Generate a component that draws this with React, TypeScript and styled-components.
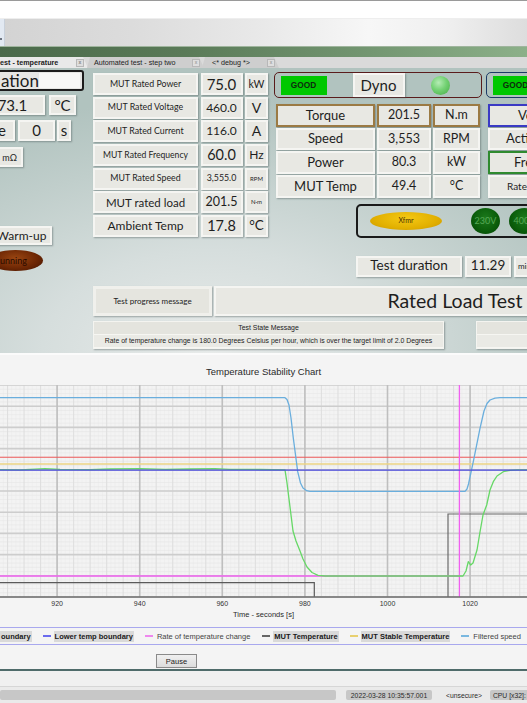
import React from "react";
import styled, { createGlobalStyle } from "styled-components";

const Global = createGlobalStyle`
  html, body { margin: 0; padding: 0; background: #ffffff; }
  body { font-family: Lato, "Noto Sans", sans-serif; }
  #root { width: 527px; height: 703px; }
`;

const Screen = styled.div`
  width: 527px;
  height: 703px;
  overflow: hidden;
  display: flex;
  flex-direction: column;
  background: #ffffff;
`;

const TopGap = styled.div`
  flex: none;
  height: 17px;
  border-top: 1px solid #9a9a9a;
  background: #ffffff;
`;

const Toolbar = styled.div`
  flex: none;
  height: 28px;
  display: flex;
  background: linear-gradient(90deg, #d3d3d3 0%, #dcdcdc 25%, #e9e9e9 50%, #f7f7f7 70%, #efefef 85%, #dddddd 100%);
  border-top: 1px solid #eeeeee;
  box-sizing: border-box;
`;

const ToolbarStub = styled.div`
  width: 4px;
  height: 100%;
  background: #e2e9f2;
  border-right: 1px solid #c8d0da;
  position: relative;
  &::after {
    content: "";
    position: absolute;
    left: 0;
    top: 19px;
    width: 2px;
    height: 2px;
    background: #6d7480;
  }
`;

const GreenBand = styled.div`
  flex: none;
  height: 11px;
  background: linear-gradient(90deg, #4a694a 0%, #5a7a58 35%, #739671 70%, #8cb089 100%);
  border-top: 1px solid #9fb59d;
  box-sizing: border-box;
`;

const TabBar = styled.div`
  flex: none;
  height: 11px;
  display: flex;
  background: #dadada;
`;

const Tab = styled.div<{ $active?: boolean; $w: number; $ml?: number; $pl: number }>`
  flex: none;
  width: ${(p) => p.$w}px;
  margin-left: ${(p) => p.$ml ?? 0}px;
  padding-left: ${(p) => p.$pl}px;
  padding-right: 4px;
  box-sizing: border-box;
  display: flex;
  align-items: center;
  background: ${(p) => (p.$active ? "#e9e9e9" : "#cecece")};
  clip-path: polygon(0 100%, 3px 0, calc(100% - 5px) 0, 100% 100%);
  font-family: "Liberation Sans", Arial, sans-serif;
  font-size: 7.2px;
  font-weight: ${(p) => (p.$active ? 700 : 400)};
  color: #222222;
  white-space: nowrap;
`;

const TabClose = styled.span`
  margin-left: auto;
  width: 6px;
  height: 6px;
  border: 1px solid #b8b8b8;
  background: #dedede;
  color: #888888;
  font-size: 5px;
  line-height: 5px;
  text-align: center;
  font-family: "Liberation Sans", Arial, sans-serif;
`;

const Main = styled.div`
  flex: none;
  height: 285px;
  box-sizing: border-box;
  padding-top: 2px;
  display: flex;
  flex-direction: column;
  background:
    radial-gradient(ellipse 80% 90% at 40% 100%, #e8ebea 0%, #d6dedd 40%, #c0cecb 75%, #b1c3bf 100%);
`;

const TopSection = styled.div`
  display: flex;
  align-items: flex-start;
`;

const LeftCol = styled.div`
  flex: none;
  width: 84px;
  display: flex;
  flex-direction: column;
  align-items: flex-start;
`;

const Row = styled.div<{ $h: number; $mt?: number; $ml?: number }>`
  flex: none;
  display: flex;
  height: ${(p) => p.$h}px;
  margin-top: ${(p) => p.$mt ?? 0}px;
  margin-left: ${(p) => p.$ml ?? 0}px;
`;

const Cell = styled.div<{ $w?: number; $fs: number; $bc?: string; $jc?: string; $pl?: number; $pr?: number; $ml?: number }>`
  box-sizing: border-box;
  flex: none;
  ${(p) => (p.$w !== undefined ? `width: ${p.$w}px;` : "")}
  margin-left: ${(p) => p.$ml ?? 0}px;
  height: 100%;
  display: flex;
  align-items: center;
  justify-content: ${(p) => p.$jc ?? "center"};
  padding-left: ${(p) => p.$pl ?? 0}px;
  padding-right: ${(p) => p.$pr ?? 0}px;
  background: #e8e8e3;
  border: 2px solid ${(p) => p.$bc ?? "#f5f5f2"};
  box-shadow: 1px 1px 1.5px rgba(70, 85, 85, 0.45);
  font-size: ${(p) => p.$fs}px;
  color: #1e1e1e;
  white-space: nowrap;
  overflow: hidden;
  line-height: 1;
`;

const TitleBox = styled.div`
  box-sizing: border-box;
  width: 100px;
  height: 21px;
  margin-left: -16px;
  padding-left: 15px;
  padding-right: 2px;
  display: flex;
  align-items: center;
  background: #e6e6e4;
  border: 2px solid #1c1c1c;
  border-radius: 3px;
  font-size: 17px;
  color: #1a1a1a;
  line-height: 1;
`;

const TitleFill = styled.span`
  margin-left: auto;
  width: 42px;
  height: 15px;
  background: #f7f7f6;
`;

const Ellipse = styled.div<{ $w: number; $h: number; $ml: number; $bg: string; $fs: number; $color: string; $pl?: number; $jc?: string }>`
  flex: none;
  box-sizing: border-box;
  width: ${(p) => p.$w}px;
  height: ${(p) => p.$h}px;
  margin-left: ${(p) => p.$ml}px;
  padding-left: ${(p) => p.$pl ?? 0}px;
  border-radius: 50%;
  background: ${(p) => p.$bg};
  display: flex;
  align-items: center;
  justify-content: ${(p) => p.$jc ?? "center"};
  font-size: ${(p) => p.$fs}px;
  color: ${(p) => p.$color};
  line-height: 1;
  white-space: nowrap;
`;

const MidCol = styled.div`
  flex: none;
  width: 175px;
  margin-left: 9px;
  margin-top: 3px;
  display: grid;
  grid-template-columns: 105px 42px 23px;
  grid-auto-rows: 22px;
  column-gap: 2.5px;
  row-gap: 1.7px;
`;

const RightCol = styled.div`
  flex: none;
  width: 320px;
  margin-left: 6px;
  display: flex;
  flex-direction: column;
`;

const DynoRow = styled.div`
  display: flex;
  align-items: flex-start;
`;

const GroupCol = styled.div<{ $w: number; $ml?: number }>`
  flex: none;
  width: ${(p) => p.$w}px;
  margin-left: ${(p) => p.$ml ?? 0}px;
  display: flex;
  flex-direction: column;
`;

const GroupBox = styled.div<{ $bc: string }>`
  box-sizing: border-box;
  height: 26px;
  margin-top: 2px;
  border: 1.5px solid ${(p) => p.$bc};
  border-radius: 5px;
  display: flex;
  align-items: center;
  padding-left: 5.5px;
`;

const Good = styled.div`
  flex: none;
  width: 46px;
  height: 19px;
  background: #00c800;
  display: flex;
  align-items: center;
  justify-content: center;
  font-family: "Liberation Sans", Arial, sans-serif;
  font-weight: 700;
  font-size: 8.3px;
  color: #0e2a0e;
`;

const Led = styled.div`
  flex: none;
  width: 19px;
  height: 19px;
  margin-left: 26px;
  border-radius: 50%;
  background: radial-gradient(circle at 40% 35%, #b5ecb5 0%, #74d274 45%, #44aa44 100%);
`;

const DataGrid = styled.div<{ $cols: string }>`
  margin-top: 6px;
  margin-left: 2px;
  display: grid;
  grid-template-columns: ${(p) => p.$cols};
  grid-auto-rows: 22.5px;
  column-gap: 2px;
  row-gap: 1.2px;
`;

const XfmrPanel = styled.div`
  box-sizing: border-box;
  width: 240px;
  height: 34px;
  margin-top: 6px;
  margin-left: 82px;
  border: 2px solid #1a1a1a;
  border-radius: 5px;
  display: flex;
  align-items: center;
`;

const ProgressRow = styled.div`
  display: flex;
  height: 30px;
  margin-top: 9px;
  margin-left: 93px;
`;

const InsetCell = styled.div<{ $w: number; $ml?: number }>`
  flex: none;
  box-sizing: border-box;
  width: ${(p) => p.$w}px;
  height: 100%;
  margin-left: ${(p) => p.$ml ?? 0}px;
  padding: 3px;
  background: #f0f0ec;
  box-shadow: 1px 1px 1.5px rgba(70, 85, 85, 0.45);
  display: flex;
`;

const InsetInner = styled.div<{ $fs: number }>`
  flex: 1;
  background: #e5e5df;
  display: flex;
  align-items: center;
  justify-content: center;
  font-size: ${(p) => p.$fs}px;
  color: #222;
  white-space: nowrap;
`;

const StateRow = styled.div`
  display: flex;
  height: 28px;
  margin-top: 5px;
  margin-left: 93px;
`;

const StateBox = styled.div<{ $w: number; $ml?: number }>`
  flex: none;
  box-sizing: border-box;
  width: ${(p) => p.$w}px;
  margin-left: ${(p) => p.$ml ?? 0}px;
  border: 1px solid #f4f4f0;
  box-shadow: 1px 1px 1.5px rgba(70, 85, 85, 0.45);
  display: flex;
  flex-direction: column;
  font-family: "Liberation Sans", Arial, sans-serif;
  font-size: 6.9px;
  color: #222;
`;

const StateLine = styled.div<{ $bg: string }>`
  flex: 1;
  display: flex;
  align-items: center;
  justify-content: center;
  background: ${(p) => p.$bg};
  white-space: nowrap;
  border-bottom: 1px solid #f6f6f2;
`;

/* ---------------- chart ---------------- */

const ChartSection = styled.div`
  flex: none;
  height: 316px;
  box-sizing: border-box;
  border-top: 2px solid #fbfbfb;
  background: #f4f4f4;
  display: flex;
  flex-direction: column;
  font-family: "Liberation Sans", Arial, sans-serif;
  color: #222;
`;

const ChartTitle = styled.div`
  flex: none;
  height: 30px;
  box-sizing: border-box;
  padding-top: 11px;
  text-align: center;
  font-size: 9.5px;
  line-height: 12px;
  color: #2a2a2a;
`;

const AxisTitle = styled.div`
  flex: none;
  height: 12px;
  text-align: center;
  font-size: 7.5px;
  line-height: 12px;
  color: #2a2a2a;
`;

const Legend = styled.div`
  flex: none;
  height: 18px;
  margin-top: 6px;
  box-sizing: border-box;
  border-top: 1px solid #a8a8ee;
  border-bottom: 1px solid #a8a8ee;
  display: flex;
  align-items: center;
  gap: 11px;
  font-size: 7.5px;
  white-space: nowrap;
`;

const LegendItem = styled.div`
  display: flex;
  align-items: center;
  flex: none;
`;

const LegendSwatch = styled.span<{ $c: string }>`
  width: 8px;
  height: 1.5px;
  background: ${(p) => p.$c};
  margin-right: 3px;
`;

const LegendText = styled.span<{ $bold?: boolean }>`
  font-weight: ${(p) => (p.$bold ? 700 : 400)};
  background: ${(p) => (p.$bold ? "#d9d9d9" : "transparent")};
  color: ${(p) => (p.$bold ? "#1a1a1a" : "#444")};
  padding: 1px 1px;
`;

const PauseRow = styled.div`
  flex: none;
  height: 14px;
  margin-top: 9px;
  display: flex;
`;

const PauseButton = styled.button`
  margin: 0 0 0 156px;
  width: 41px;
  height: 14px;
  padding: 0;
  border: 1px solid #8a8a8a;
  background: linear-gradient(#f0f0f0, #dcdcdc);
  font-family: "Liberation Sans", Arial, sans-serif;
  font-size: 7.5px;
  color: #222;
`;

const DarkRule = styled.div`
  flex: none;
  height: 2px;
  background: #4f6b6a;
`;

const FooterTop = styled.div`
  flex: none;
  height: 15px;
  background: #f0f0f0;
  border-bottom: 1px solid #d6d6d6;
`;

const StatusBar = styled.div`
  flex: none;
  height: 16px;
  box-sizing: border-box;
  padding-top: 3px;
  background: #eaeaea;
  display: flex;
  align-items: flex-start;
  font-family: "Liberation Sans", Arial, sans-serif;
  font-size: 6.8px;
  color: #2a2a2a;
  white-space: nowrap;
`;

const StatusPill = styled.div<{ $w: number; $ml?: number; $pl?: number }>`
  flex: none;
  box-sizing: border-box;
  width: ${(p) => p.$w}px;
  height: 10px;
  margin-left: ${(p) => p.$ml ?? 0}px;
  padding-left: ${(p) => p.$pl ?? 0}px;
  background: #c7c7c7;
  border-radius: 2px;
  display: flex;
  align-items: center;
  justify-content: ${(p) => (p.$pl !== undefined ? "flex-start" : "center")};
`;

const StatusText = styled.div<{ $ml: number }>`
  flex: none;
  height: 10px;
  margin-left: ${(p) => p.$ml}px;
  display: flex;
  align-items: center;
`;

/* ---------------- data ---------------- */

const rated = [
  { label: "MUT Rated Power", lfs: 8.8, value: "75.0", vfs: 15, unit: "kW", ufs: 10.5 },
  { label: "MUT Rated Voltage", lfs: 8.8, value: "460.0", vfs: 12, unit: "V", ufs: 14 },
  { label: "MUT Rated Current", lfs: 8.8, value: "116.0", vfs: 12, unit: "A", ufs: 14 },
  { label: "MUT Rated Frequency", lfs: 8.6, value: "60.0", vfs: 14.5, unit: "Hz", ufs: 12 },
  { label: "MUT Rated Speed", lfs: 8.8, value: "3,555.0", vfs: 8.8, unit: "RPM", ufs: 6 },
  { label: "MUT rated load", lfs: 11.5, value: "201.5", vfs: 12.5, unit: "N·m", ufs: 6 },
  { label: "Ambient Temp", lfs: 12, value: "17.8", vfs: 14.5, unit: "°C", ufs: 13.5 },
];

const dyno = [
  { label: "Torque", value: "201.5", unit: "N.m", bc: "#9b7a44" },
  { label: "Speed", value: "3,553", unit: "RPM" },
  { label: "Power", value: "80.3", unit: "kW" },
  { label: "MUT Temp", value: "49.4", unit: "°C" },
];

const far = [
  { label: "Voltage", pl: 28, fs: 13, bc: "#3a3ac4" },
  { label: "Active power", pl: 16, fs: 13 },
  { label: "Frequency", pl: 24, fs: 13, bc: "#2f8a2f" },
  { label: "Rated slip", pl: 17, fs: 10 },
];

const legendItems = [
  { c: "", t: "oundary", bold: true },
  { c: "#6b6bee", t: "Lower temp boundary", bold: true },
  { c: "#ee88ee", t: "Rate of temperature change" },
  { c: "#666666", t: "MUT Temperature", bold: true },
  { c: "#e8d070", t: "MUT Stable Temperature", bold: true },
  { c: "#7ab8e0", t: "Filtered speed" },
];

/* ---------------- chart drawing ---------------- */

const X0 = 57.1;
const PX_PER_S = 82.6 / 20;
const tx = (t: number) => X0 + (t - 920) * PX_PER_S;

const pts = (arr: number[][]) => arr.map(([x, y]) => `${x},${y}`).join(" ");

const greenPts = pts([
  [0, 84.6], [20, 84.8], [35, 84.2], [45, 83.6], [60, 84.4], [90, 84.6], [110, 84.0],
  [140, 83.7], [165, 84.4], [190, 84.0], [215, 83.6], [230, 84.3], [260, 84.5], [285, 84.8],
  [287, 98], [290, 122], [293, 146], [296, 156], [300, 166], [303, 174], [307, 182],
  [312, 187.5], [318, 190.3], [325, 191], [463, 191], [466, 186], [468.3, 176.7],
  [470.7, 180], [473, 178], [477, 165], [480, 147], [483, 130], [486.7, 120], [490, 105],
  [493.3, 96.7], [497, 91], [503.3, 86.7], [510, 85.3], [517, 84.8], [527, 84.8],
]);

const speedPts = pts([
  [0, 12.7], [285, 12.7], [287, 14.5], [289, 20], [291, 33], [293.3, 53], [297.7, 86.7],
  [300.5, 98], [303, 103], [306.7, 105.7], [310, 106.4], [465, 106.4], [467, 104],
  [468.5, 99], [473.3, 76.7], [480, 43.3], [484, 26], [487, 18.5], [490, 15], [495, 13.2],
  [500, 12.7], [527, 12.7],
]);

const ChartPlot: React.FC = () => {
  const minorH: number[] = [];
  for (let i = 0; i <= 50; i++) minorH.push(i * 4.24);
  const majorH: number[] = [];
  for (let i = 0; i <= 10; i++) majorH.push(i * 21.2);
  const faintV: number[] = [];
  for (let t = 906; t <= 1040; t += 1) faintV.push(tx(t));
  const minorV: number[] = [];
  for (let t = 904; t <= 1040; t += 4) minorV.push(tx(t));
  const majorV = [900, 920, 940, 960, 980, 1000, 1020, 1040];
  const ticks = [920, 940, 960, 980, 1000, 1020];
  return (
    <svg width={527} height={224} viewBox="0 0 527 224" style={{ display: "block", flex: "none" }}>
      <rect x={0} y={0} width={527} height={212} fill="#f3f3f3" />
      {faintV.map((x, i) => (
        <line key={`fv${i}`} x1={x} y1={0} x2={x} y2={212} stroke="#ebebeb" strokeWidth={0.5} />
      ))}
      {minorH.map((y, i) => (
        <line key={`mh${i}`} x1={0} y1={y} x2={527} y2={y} stroke="#e6e6e6" strokeWidth={0.6} />
      ))}
      {minorV.map((x, i) => (
        <line key={`mv${i}`} x1={x} y1={0} x2={x} y2={212} stroke="#dddddd" strokeWidth={0.9} />
      ))}
      {majorH.map((y, i) => (
        <line key={`MH${i}`} x1={0} y1={y} x2={527} y2={y} stroke="#cdcdcd" strokeWidth={1.6} />
      ))}
      {majorV.map((t, i) => (
        <line key={`MV${i}`} x1={tx(t)} y1={0} x2={tx(t)} y2={212} stroke="#bfbfbf" strokeWidth={1.6} />
      ))}
      <line x1={0} y1={72.3} x2={527} y2={72.3} stroke="#ee5a5a" strokeWidth={1.1} />
      <line x1={0} y1={79} x2={527} y2={79} stroke="#ecd585" strokeWidth={1.4} />
      <polyline points={speedPts} fill="none" stroke="#6aaedd" strokeWidth={1.3} strokeLinejoin="round" />
      <polyline
        points={pts([[0, 197.7], [314.3, 197.7], [314.3, 212]])}
        fill="none"
        stroke="#5a5a5a"
        strokeWidth={1.2}
      />
      <polyline
        points={pts([[448, 212], [448, 129], [527, 129]])}
        fill="none"
        stroke="#6a6a6a"
        strokeWidth={1.2}
      />
      <line x1={0} y1={191} x2={459.4} y2={191} stroke="#f060f0" strokeWidth={1.3} />
      <line x1={459.4} y1={0} x2={459.4} y2={212} stroke="#f060f0" strokeWidth={1.3} />
      <polyline points={greenPts} fill="none" stroke="#66d866" strokeWidth={1.3} strokeLinejoin="round" />
      <line x1={0} y1={85.2} x2={527} y2={85.2} stroke="#4848dc" strokeWidth={1.2} />
      <line x1={0} y1={212} x2={527} y2={212} stroke="#6e6e6e" strokeWidth={1.3} />
      {ticks.map((t) => (
        <text
          key={t}
          x={tx(t)}
          y={221}
          textAnchor="middle"
          fontSize={7}
          fill="#333"
          fontFamily="'Liberation Sans', Arial, sans-serif"
        >
          {t}
        </text>
      ))}
    </svg>
  );
};

/* ---------------- app ---------------- */

export default function App() {
  return (
    <Screen>
      <Global />
      <TopGap />
      <Toolbar>
        <ToolbarStub />
      </Toolbar>
      <GreenBand />
      <TabBar>
        <Tab $active $w={98} $ml={-10} $pl={10}>
          est - temperature
          <TabClose>x</TabClose>
        </Tab>
        <Tab $w={117} $ml={-1} $pl={7}>
          Automated test - step two
          <TabClose>x</TabClose>
        </Tab>
        <Tab $w={77} $ml={-2} $pl={10}>
          {"<* debug *>"}
          <TabClose>x</TabClose>
        </Tab>
      </TabBar>

      <Main>
        <TopSection>
          <LeftCol>
            <TitleBox>
              ation
              <TitleFill />
            </TitleBox>
            <Row $h={20} $mt={4} $ml={-20}>
              <Cell $w={65} $fs={15}>73.1</Cell>
              <Cell $w={27} $ml={4} $fs={15}>°C</Cell>
            </Row>
            <Row $h={21} $mt={5} $ml={-30}>
              <Cell $w={45} $fs={15} $jc="flex-end" $pr={7}>e</Cell>
              <Cell $w={37} $ml={3} $fs={15}>0</Cell>
              <Cell $w={14} $ml={2} $fs={15}>s</Cell>
            </Row>
            <Row $h={20} $mt={6} $ml={-17}>
              <Cell $w={40} $fs={9} $jc="flex-end" $pr={4}>mΩ</Cell>
            </Row>
            <Row $h={19} $mt={59} $ml={-9}>
              <Cell $w={61} $fs={12}>Warm-up</Cell>
            </Row>
            <Row $h={21} $mt={5}>
              <Ellipse
                $w={55}
                $h={21}
                $ml={-12}
                $pl={12}
                $jc="flex-start"
                $fs={9}
                $color="#2a0a00"
                $bg="radial-gradient(ellipse at 50% 40%, #9a4612 0%, #6e2704 55%, #3f1200 100%)"
              >
                unning
              </Ellipse>
            </Row>
          </LeftCol>

          <MidCol>
            {rated.map((r) => (
              <React.Fragment key={r.label}>
                <Cell $fs={r.lfs}>{r.label}</Cell>
                <Cell $fs={r.vfs}>{r.value}</Cell>
                <Cell $fs={r.ufs}>{r.unit}</Cell>
              </React.Fragment>
            ))}
          </MidCol>

          <RightCol>
            <DynoRow>
              <GroupCol $w={208}>
                <GroupBox $bc="#5a1c1c">
                  <Good>GOOD</Good>
                  <Cell $w={52} $ml={26} $fs={15}>Dyno</Cell>
                  <Led />
                </GroupBox>
                <DataGrid $cols="99px 54px 47px">
                  {dyno.map((d) => (
                    <React.Fragment key={d.label}>
                      <Cell $fs={13} $bc={d.bc}>{d.label}</Cell>
                      <Cell $fs={12.5} $bc={d.bc}>{d.value}</Cell>
                      <Cell $fs={12.5} $bc={d.bc}>{d.unit}</Cell>
                    </React.Fragment>
                  ))}
                </DataGrid>
              </GroupCol>
              <GroupCol $w={104} $ml={4}>
                <GroupBox $bc="#1c3a66">
                  <Good>GOOD</Good>
                </GroupBox>
                <DataGrid $cols="99px">
                  {far.map((f) => (
                    <Cell key={f.label} $fs={f.fs} $bc={f.bc} $jc="flex-start" $pl={f.pl}>
                      {f.label}
                    </Cell>
                  ))}
                </DataGrid>
              </GroupCol>
            </DynoRow>

            <XfmrPanel>
              <Ellipse
                $w={72}
                $h={18}
                $ml={12}
                $fs={7}
                $color="#4a3000"
                $bg="radial-gradient(ellipse at 50% 35%, #f4c814 0%, #e2b000 60%, #c89600 100%)"
              >
                Xfmr
              </Ellipse>
              <Ellipse
                $w={29}
                $h={26}
                $ml={29}
                $fs={9}
                $color="#56a856"
                $bg="radial-gradient(ellipse at 50% 40%, #1c7a1c 0%, #0a5c0a 60%, #054005 100%)"
              >
                230V
              </Ellipse>
              <Ellipse
                $w={31}
                $h={26}
                $ml={9}
                $fs={9}
                $color="#56a856"
                $bg="radial-gradient(ellipse at 50% 40%, #1c7a1c 0%, #0a5c0a 60%, #054005 100%)"
              >
                400V
              </Ellipse>
            </XfmrPanel>

            <Row $h={21} $mt={18} $ml={82}>
              <Cell $w={106} $fs={13.5}>Test duration</Cell>
              <Cell $w={46} $ml={3} $fs={13.5}>11.29</Cell>
              <Cell $w={34} $ml={3} $fs={8} $jc="flex-start" $pl={2}>min</Cell>
            </Row>
          </RightCol>
        </TopSection>

        <ProgressRow>
          <InsetCell $w={119}>
            <InsetInner $fs={8}>Test progress message</InsetInner>
          </InsetCell>
          <Cell $w={482} $ml={2} $fs={19.5}>Rated Load Test</Cell>
        </ProgressRow>

        <StateRow>
          <StateBox $w={351}>
            <StateLine $bg="#e4e4de">Test State Message</StateLine>
            <StateLine $bg="#eaeae5">
              Rate of temperature change is 180.0 Degrees Celsius per hour, which is over the target limit of 2.0 Degrees
            </StateLine>
          </StateBox>
          <StateBox $w={100} $ml={32}>
            <StateLine $bg="#e4e4de" />
            <StateLine $bg="#eaeae5" />
          </StateBox>
        </StateRow>
      </Main>

      <ChartSection>
        <ChartTitle>Temperature Stability Chart</ChartTitle>
        <ChartPlot />
        <AxisTitle>Time - seconds [s]</AxisTitle>
        <Legend>
          {legendItems.map((l) => (
            <LegendItem key={l.t}>
              {l.c && <LegendSwatch $c={l.c} />}
              <LegendText $bold={l.bold}>{l.t}</LegendText>
            </LegendItem>
          ))}
        </Legend>
        <PauseRow>
          <PauseButton>Pause</PauseButton>
        </PauseRow>
      </ChartSection>
      <DarkRule />
      <FooterTop />
      <StatusBar>
        <StatusPill $w={336} />
        <StatusPill $w={86} $ml={10}>2022-03-28 10:35:57.001</StatusPill>
        <StatusText $ml={14}>{"<unsecure>"}</StatusText>
        <StatusPill $w={60} $ml={8} $pl={3}>CPU [x32]: (</StatusPill>
      </StatusBar>
    </Screen>
  );
}
